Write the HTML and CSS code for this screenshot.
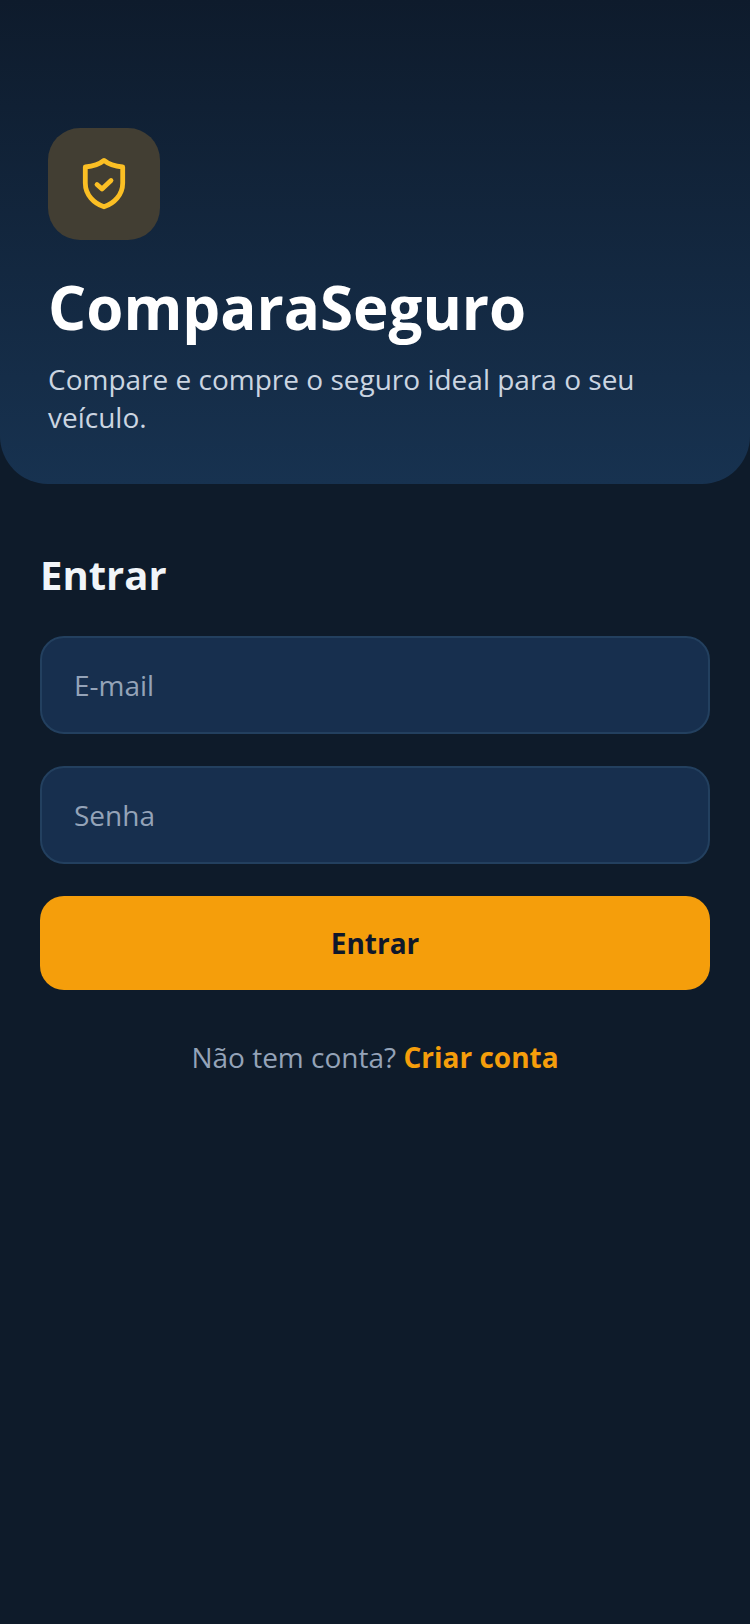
FILE: index.html
```html
<!DOCTYPE html>
<html lang="pt-BR">
<head>
<meta charset="utf-8">
<title>ComparaSeguro</title>
<link rel="stylesheet" href="styles.css">
</head>
<body>
<main class="screen">
  <header class="hero">
    <div class="logo">
      <svg class="logo-icon" viewBox="0 0 56 56" fill="none" stroke="#fbbf24" stroke-width="4.8" stroke-linecap="round" stroke-linejoin="round">
        <path d="M28 4.4 C32 7.8 38 10.2 46.7 11 L46.7 27 C46.7 39 38 47.4 28 50.8 C18 47.4 9.3 39 9.3 27 L9.3 11 C18 10.2 24 7.8 28 4.4 Z"/>
        <path d="M21 28.5 L26 33 L35 24.5"/>
      </svg>
    </div>
    <h1 class="brand">ComparaSeguro</h1>
    <p class="tagline">Compare e compre o seguro ideal para o seu veículo.</p>
  </header>
  <section class="form">
    <h2 class="form-title">Entrar</h2>
    <div class="field"><span class="placeholder">E-mail</span></div>
    <div class="field"><span class="placeholder">Senha</span></div>
    <button class="submit" type="button">Entrar</button>
    <p class="signup">Não tem conta? <a class="signup-link" href="#">Criar conta</a></p>
  </section>
</main>
</body>
</html>
```
FILE: styles.css
```css
* { box-sizing: border-box; }
html, body { margin: 0; padding: 0; }
body { background: #0e1b2a; font-family: "Open Sans", sans-serif; }
.screen { width: 750px; height: 1624px; background: #0e1b2a; overflow: hidden; }
.hero {
  height: 484px;
  padding: 128px 48px 0;
  background: linear-gradient(180deg, #0e1b2c 0%, #173250 100%);
  border-radius: 0 0 48px 48px;
}
.logo {
  width: 112px; height: 112px; border-radius: 32px;
  background: #423e33;
  display: flex; align-items: center; justify-content: center;
}
.logo-icon { width: 56px; height: 56px; display: block; }
.brand { margin: 23px 0 0; font-size: 60px; line-height: 88px; font-weight: 700; color: #fff; }
.tagline { margin: 9px 0 0; font-size: 28px; line-height: 38px; color: #cbd5e1; }
.form { padding: 63px 40px 0; display: flex; flex-direction: column; }
.form-title { margin: 0 0 33px; font-size: 40px; line-height: 56px; font-weight: 700; color: #f1f5f9; }
.field {
  height: 98px; margin-bottom: 32px; padding: 0 32px;
  background: #172f4e; border: 2px solid #23405f; border-radius: 24px;
  display: flex; align-items: center;
}
.placeholder { font-size: 28px; color: #94a3b8; }
.submit {
  height: 94px; border: 0; border-radius: 24px; background: #f59e0b;
  font-family: inherit; font-size: 28px; font-weight: 700; color: #0f172a;
}
.signup { margin: 48px 0 0; text-align: center; font-size: 28px; line-height: 38px; color: #94a3b8; }
.signup-link { color: #f59e0b; font-weight: 700; text-decoration: none; }
```
